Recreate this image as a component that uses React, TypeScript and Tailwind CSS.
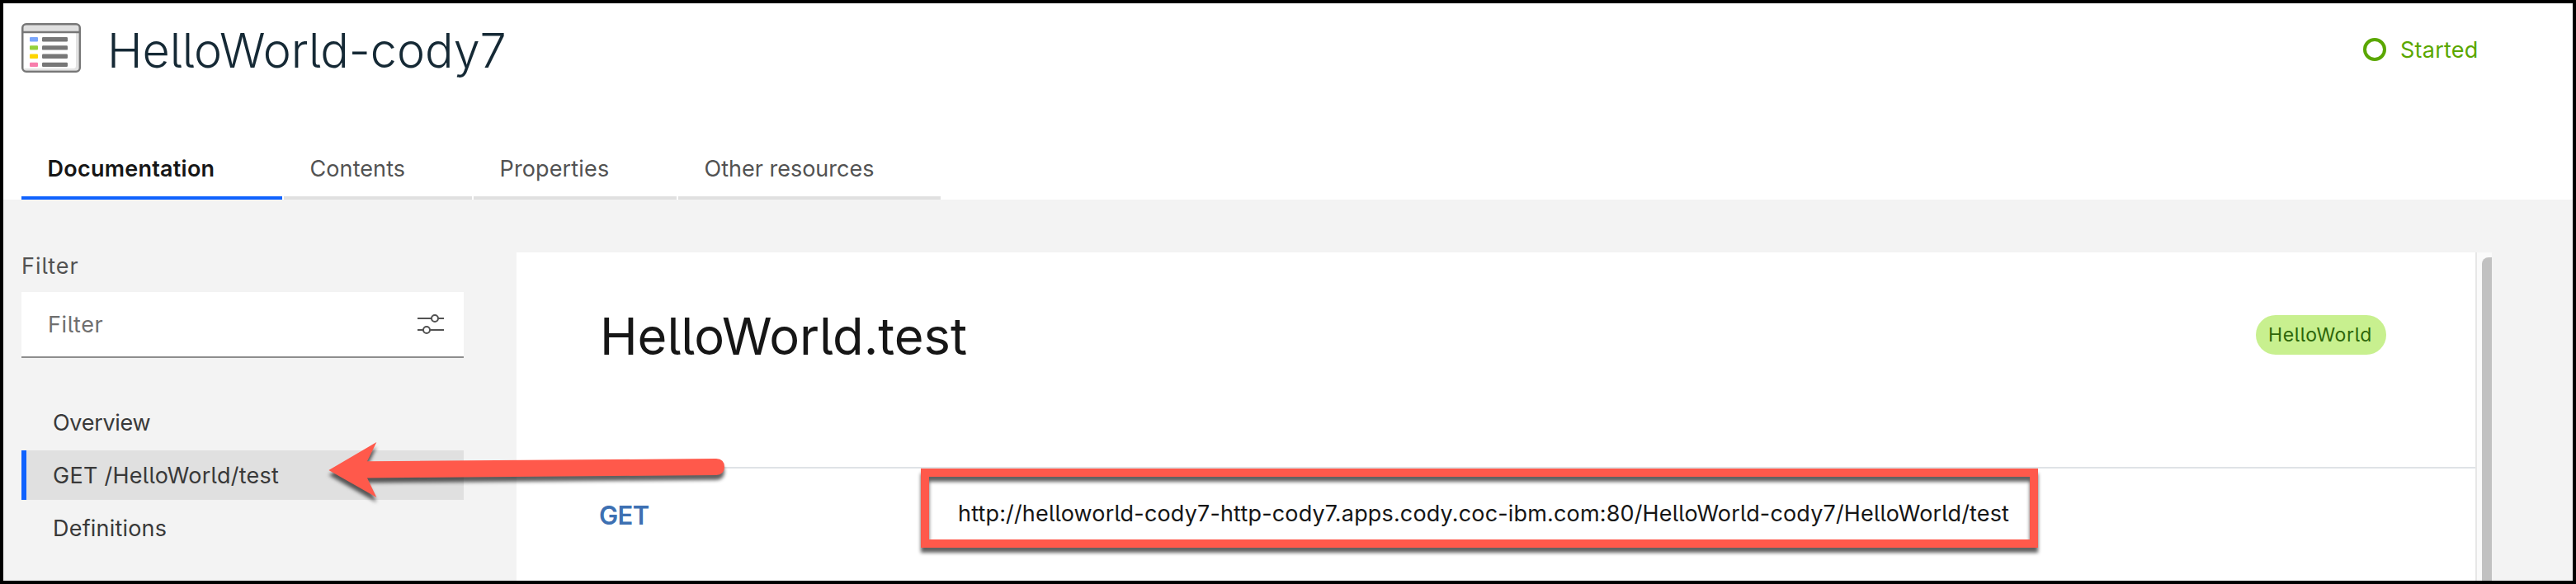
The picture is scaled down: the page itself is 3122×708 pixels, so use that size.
function AppIcon() {
  return (
    <svg className="h-[60px] w-[72px]" viewBox="0 0 72 60" fill="none">
      <rect x="1.25" y="1.25" width="69.5" height="57.5" rx="4.5" fill="#fff" />
      <path d="M69 11v46H3v-2h60q3 0 3-3V11z" fill="#e3e3e3" />
      <path d="M2 11V6q0-4 4-4h60q4 0 4 4v5z" fill="#e0e0e0" />
      <rect x="1.25" y="1.25" width="69.5" height="57.5" rx="4.5" stroke="#777" strokeWidth="2.5" />
      <path d="M2 11h68" stroke="#777" strokeWidth="2.4" />
      <rect x="10" y="17" width="10" height="5.4" rx="1" fill="#7ba6fb" />
      <rect x="10" y="27.2" width="10" height="5.4" rx="1" fill="#95d13c" />
      <rect x="10" y="37.6" width="10" height="5.4" rx="1" fill="#fed500" />
      <rect x="10" y="47.8" width="10" height="5.2" rx="1" fill="#f87eac" />
      <g fill="#777">
        <rect x="25" y="17" width="31" height="5.4" rx="1.2" />
        <rect x="25" y="27.2" width="31" height="5.4" rx="1.2" />
        <rect x="25" y="37.6" width="31" height="5.4" rx="1.2" />
        <rect x="25" y="47.8" width="31" height="5.2" rx="1.2" />
      </g>
    </svg>
  );
}

function SettingsIcon() {
  return (
    <svg className="h-8 w-8" viewBox="0 0 32 32" fill="none" stroke="#525252" strokeWidth="2">
      <path d="M0 9h17M25 9h7M0 23h7M15 23h17" />
      <circle cx="21" cy="9" r="4" />
      <circle cx="11" cy="23" r="4" />
    </svg>
  );
}

const tabs = [
  { label: "Documentation", box: "w-[316px] border-[#0f62fe] font-semibold tracking-[0.24px] text-[#161616]" },
  { label: "Contents", box: "w-[228px] border-[#e0e0e0] tracking-[0.09px] text-[#525252]" },
  { label: "Properties", box: "w-[246px] border-[#e0e0e0] tracking-[0.14px] text-[#525252]" },
  { label: "Other resources", box: "w-[318px] border-[#e0e0e0] text-[#525252]" },
];

const navItems = [
  { label: "Overview", box: "border-transparent tracking-[-0.3px]" },
  { label: "GET /HelloWorld/test", box: "border-[#0f62fe] bg-[#e0e0e0] tracking-[0.26px]" },
  { label: "Definitions", box: "border-transparent tracking-[0.2px]" },
];

function Header() {
  return (
    <header className="flex h-[238px] flex-none flex-col bg-white">
      <div className="flex h-[166px] items-start pl-[22px]">
        <div className="mt-6">
          <AppIcon />
        </div>
        <h1 className="mt-[27px] ml-8 text-[57.5px] leading-[60px] font-light tracking-[-0.06px] whitespace-nowrap text-[#152935]">
          HelloWorld-cody7
        </h1>
        <div className="mt-[42px] ml-auto flex h-7 w-[254px] items-center gap-[17px] text-[#5aa700]">
          <span className="size-7 rounded-full border-4 border-[#5aa700]" />
          <span className="pt-px leading-7 tracking-[0.25px]">Started</span>
        </div>
      </div>
      <nav className="flex gap-0.5 pl-[22px]">
        {tabs.map((t) => (
          <div key={t.label} className={`flex h-[72px] items-center border-b-4 pt-0.5 pl-[31.5px] whitespace-nowrap ${t.box}`}>
            {t.label}
          </div>
        ))}
      </nav>
    </header>
  );
}

function Sidebar() {
  return (
    <aside className="ml-[22px] w-[536px] flex-none pt-[67px]">
      <div className="leading-7 tracking-[0.98px] text-[#525252]">Filter</div>
      <div className="mt-[17px] flex h-20 items-center justify-between border-b-2 border-[#8d8d8d] bg-white pr-6 pl-8">
        <span className="pt-0.5 tracking-[0.6px] text-[#6f6f6f]">Filter</span>
        <SettingsIcon />
      </div>
      <ul className="mt-12 flex flex-col gap-1">
        {navItems.map((n) => (
          <li key={n.label} className={`flex h-[60px] items-center border-l-6 pt-0.5 pl-8 text-[#393939] ${n.box}`}>
            {n.label}
          </li>
        ))}
      </ul>
    </aside>
  );
}

function Panel() {
  return (
    <main className="mt-16 ml-16 flex w-[2394px] flex-none">
      <section className="w-[2374px] bg-white">
        <div className="flex h-[262px] items-start justify-between border-b-2 border-[#dfe3e6] pr-[108px] pl-[101px]">
          <h2 className="mt-[70px] text-[61.5px] leading-[64px] tracking-[-0.08px] text-[#161616]">HelloWorld.test</h2>
          <span className="mt-[76px] flex h-12 w-[158px] items-center rounded-full bg-[#c8f08f] pl-[15px] text-[23px] tracking-[0.61px] text-[#2d660a]">
            HelloWorld
          </span>
        </div>
        <div className="flex items-start pl-[100px]">
          <span className="mt-[39px] w-[435px] text-[31px] leading-[36px] font-semibold tracking-[-0.6px] text-[#3d70b2]">GET</span>
          <span className="mt-[41px] leading-7 tracking-[0.16px] whitespace-nowrap text-[#161616]">
            http://helloworld-cody7-http-cody7.apps.cody.coc-ibm.com:80/HelloWorld-cody7/HelloWorld/test
          </span>
        </div>
      </section>
      <div className="flex w-5 justify-end overflow-hidden border-l-2 border-[#e7e7e7] bg-[#fafafa] pt-1.5">
        <div className="w-3 rounded-tl-lg bg-[#c1c1c1]" />
      </div>
    </main>
  );
}

export default function App() {
  return (
    <div className="relative flex h-[708px] w-[3122px] flex-col overflow-hidden border-4 border-black bg-[#f3f3f3] font-['Inter',sans-serif] text-[27px] leading-7 [font-feature-settings:'cv05'_1]">
      <Header />
      <div className="flex min-h-0 flex-1">
        <Sidebar />
        <Panel />
      </div>
      <div className="absolute top-[564px] left-[1112px] h-24 w-[1354px] border-10 border-[#ff594b] [filter:drop-shadow(0_6px_2px_rgba(0,0,0,0.62))]" />
      <svg
        className="absolute top-[516px] left-[376px] h-[100px] w-[520px] [filter:drop-shadow(0_6px_2px_rgba(0,0,0,0.62))]"
        viewBox="380 520 520 100"
      >
        <path
          d="M398.4 570L456.4 536L445 559.3L868 556Q878 556.5 878 566Q878 575.5 868 576L445 579.4L456.4 603Z"
          fill="#ff594b"
        />
      </svg>
    </div>
  );
}
